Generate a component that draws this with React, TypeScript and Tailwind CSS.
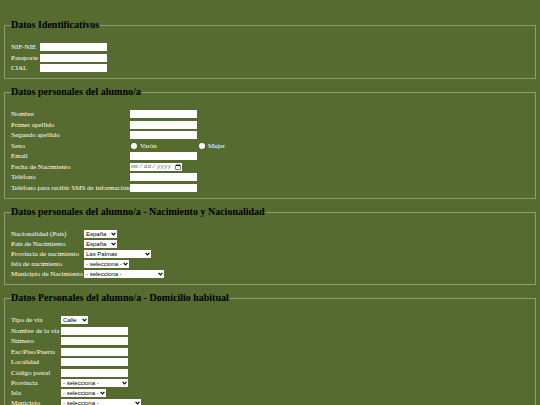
import { useId } from "react";
import type { ReactNode } from "react";
import clsx from "clsx";

interface RowProps {
  label: string;
  labelClass: string;
  htmlFor?: string;
  children: ReactNode;
}

// Fila del formulario: etiqueta + control
function Row({ label, labelClass, htmlFor, children }: RowProps) {
  return (
    <div className="flex h-[10px] items-center even:h-[11px]">
      <label htmlFor={htmlFor} className={clsx("shrink-0 whitespace-nowrap", labelClass)}>
        {label}
      </label>
      {children}
    </div>
  );
}

interface FieldProps {
  label: string;
  labelClass: string;
}

function TextField({ label, labelClass, type = "text" }: FieldProps & { type?: string }) {
  const id = useId();
  return (
    <Row label={label} labelClass={labelClass} htmlFor={id}>
      <input
        id={id}
        type={type}
        className="h-2 w-[67px] bg-white px-px font-['Liberation_Sans',sans-serif] text-[6px] leading-[8px] text-black"
      />
    </Row>
  );
}

function DateField({ label, labelClass }: FieldProps) {
  const id = useId();
  return (
    <Row label={label} labelClass={labelClass} htmlFor={id}>
      <input
        id={id}
        type="date"
        className="h-2 w-[52px] bg-white pr-px font-['Liberation_Mono',monospace] text-[6px] leading-[8px] text-neutral-500 [&::-webkit-calendar-picker-indicator]:m-0 [&::-webkit-calendar-picker-indicator]:size-[6px] [&::-webkit-calendar-picker-indicator]:p-0 [&::-webkit-datetime-edit]:p-0 [&::-webkit-datetime-edit-fields-wrapper]:p-0"
      />
    </Row>
  );
}

interface SelectFieldProps extends FieldProps {
  options: string[];
  widthClass: string;
}

function SelectField({ label, labelClass, options, widthClass }: SelectFieldProps) {
  const id = useId();
  return (
    <div className="flex h-[10px] items-center">
      <label htmlFor={id} className={clsx("shrink-0 whitespace-nowrap", labelClass)}>
        {label}
      </label>
      <div className={clsx("relative flex", widthClass)}>
        <select
          id={id}
          className="h-2 w-full appearance-none bg-white pl-[2px] font-['Liberation_Sans',sans-serif] text-[6px] leading-[8px] text-black"
        >
          {options.map((option) => (
            <option key={option}>{option}</option>
          ))}
        </select>
        <svg
          className="pointer-events-none absolute top-[2px] right-[1px] h-[4px] w-[5px]"
          viewBox="0 0 5 4"
          fill="none"
          stroke="black"
          strokeWidth="1.2"
        >
          <path d="M0.6 0.8 L2.5 2.8 L4.4 0.8" />
        </svg>
      </div>
    </div>
  );
}

function RadioOption({ label, className }: { label: string; className?: string }) {
  return (
    <label className={clsx("flex items-center gap-[3px]", className)}>
      <input
        type="radio"
        name="sexo"
        value={label}
        className="ml-px size-[6px] appearance-none rounded-full bg-white checked:border checked:border-white checked:bg-blue-600"
      />
      {label}
    </label>
  );
}

function Section({ title, children }: { title: string; children: ReactNode }) {
  return (
    <fieldset className="min-w-0 border border-[#8f9b78] px-[6px] pb-[5px]">
      <legend className="h-3 pr-px whitespace-nowrap text-[10px] leading-[12px] font-bold text-black">
        {title}
      </legend>
      <div className="pt-[11px]">{children}</div>
    </fieldset>
  );
}

const SELECCIONA = ["- selecciona -"];

export default function App() {
  return (
    <main className="min-h-screen bg-[#556b2f] px-1 pt-[19px] pb-2 font-['Liberation_Serif',serif] text-[7px] leading-[8px] text-white">
      <form className="flex flex-col gap-[7px]">
        <Section title="Datos Identificativos">
          <TextField label="NIF-NIE" labelClass="w-[29px]" />
          <TextField label="Pasaporte" labelClass="w-[29px]" />
          <TextField label="CIAL" labelClass="w-[29px]" />
        </Section>

        <Section title="Datos personales del alumno/a">
          <TextField label="Nombre" labelClass="w-[119px]" />
          <TextField label="Primer apellido" labelClass="w-[119px]" />
          <TextField label="Segundo apellido" labelClass="w-[119px]" />
          <div role="radiogroup" aria-label="Sexo" className="flex h-[10px] items-center even:h-[11px]">
            <span className="w-[119px] shrink-0">Sexo</span>
            <RadioOption label="Varón" className="w-[68px]" />
            <RadioOption label="Mujer" />
          </div>
          <TextField label="Email" labelClass="w-[119px]" type="email" />
          <DateField label="Fecha de Nacimiento" labelClass="w-[119px]" />
          <TextField label="Teléfono" labelClass="w-[119px]" type="tel" />
          <TextField label="Teléfono para recibir SMS de información" labelClass="w-[119px]" type="tel" />
        </Section>

        <Section title="Datos personales del alumno/a - Nacimiento y Nacionalidad">
          <SelectField label="Nacionalidad (País)" labelClass="w-[73px]" options={["España"]} widthClass="w-[33px]" />
          <SelectField label="País de Nacimiento" labelClass="w-[73px]" options={["España"]} widthClass="w-[33px]" />
          <SelectField
            label="Provincia de nacimiento"
            labelClass="w-[73px]"
            options={["Las Palmas", "Santa Cruz de Tenerife"]}
            widthClass="w-[67px]"
          />
          <SelectField label="Isla de nacimiento" labelClass="w-[73px]" options={SELECCIONA} widthClass="w-[45px]" />
          <SelectField label="Municipio de Nacimiento" labelClass="w-[73px]" options={SELECCIONA} widthClass="w-[80px]" />
        </Section>

        <Section title="Datos Personales del alumno/a - Domicilio habitual">
          <SelectField label="Tipo de vía" labelClass="w-[50px]" options={["Calle", "Avenida", "Plaza"]} widthClass="w-[27px]" />
          <TextField label="Nombre de la vía" labelClass="w-[50px]" />
          <TextField label="Número" labelClass="w-[50px]" />
          <TextField label="Esc/Piso/Puerta" labelClass="w-[50px]" />
          <TextField label="Localidad" labelClass="w-[50px]" />
          <TextField label="Código postal" labelClass="w-[50px]" />
          <SelectField label="Provincia" labelClass="w-[50px]" options={SELECCIONA} widthClass="w-[67px]" />
          <SelectField label="Isla" labelClass="w-[50px]" options={SELECCIONA} widthClass="w-[45px]" />
          <SelectField label="Municipio" labelClass="w-[50px]" options={SELECCIONA} widthClass="w-[80px]" />
        </Section>
      </form>
    </main>
  );
}
